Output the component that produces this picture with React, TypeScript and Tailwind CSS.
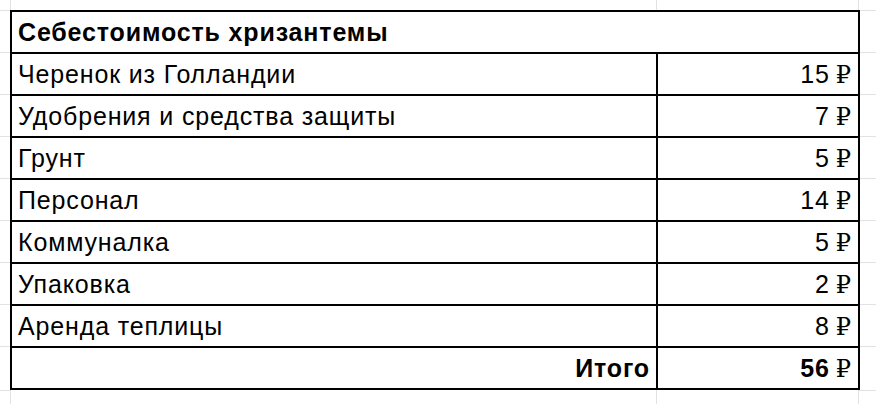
const items = [
  { name: 'Черенок из Голландии', cost: 15 },
  { name: 'Удобрения и средства защиты', cost: 7 },
  { name: 'Грунт', cost: 5 },
  { name: 'Персонал', cost: 14 },
  { name: 'Коммуналка', cost: 5 },
  { name: 'Упаковка', cost: 2 },
  { name: 'Аренда теплицы', cost: 8 },
]

function Rub() {
  return <span className="font-['DejaVu_Serif','Liberation_Serif',serif] text-[24px] font-normal tracking-normal">₽</span>
}

export default function App() {
  const total = items.reduce((s, i) => s + i.cost, 0)

  return (
    <div className="h-[404px] w-[876px] overflow-hidden bg-white font-['Liberation_Sans',Arial,sans-serif] text-[25px] tracking-[0.85px] text-black">
      {/* sheet gridlines above */}
      <div className="flex h-[10px]">
        <div className="w-[11px] border-r border-[#e2e2e2]" />
        <div className="w-[646px] border-r border-[#e2e2e2]" />
        <div className="w-[202px] border-r border-[#e2e2e2]" />
        <div className="flex-1" />
      </div>

      <div className="flex">
        <div className="flex w-[10px] flex-col">
          {Array.from({ length: 9 }).map((_, i) => (
            <div key={i} className="h-[42px] border-t border-[#e2e2e2]" />
          ))}
        </div>

        {/* the table */}
        <div className="w-[850px] border-2 border-black">
          <div className="flex h-[42px] items-center border-b-2 border-black pl-[6px] pt-[2px] font-bold">
            Себестоимость хризантемы
          </div>
          {items.map((it) => (
            <div key={it.name} className="flex h-[42px] border-b-2 border-black">
              <div className="flex w-[646px] items-center border-r-2 border-black pl-[6px] pt-[2px]">{it.name}</div>
              <div className="flex flex-1 items-center justify-end gap-[6px] pr-[7px] pt-[2px]">
                {it.cost} <Rub />
              </div>
            </div>
          ))}
          <div className="flex h-[40px] font-bold">
            <div className="flex w-[646px] items-center justify-end border-r-2 border-black pr-[6px] pt-[2px]">Итого</div>
            <div className="flex flex-1 items-center justify-end gap-[6px] pr-[7px] pt-[2px]">
              {total} <Rub />
            </div>
          </div>
        </div>

        <div className="flex flex-1 flex-col">
          {Array.from({ length: 9 }).map((_, i) => (
            <div key={i} className="h-[42px] border-t border-[#e2e2e2]" />
          ))}
        </div>
      </div>

      {/* sheet gridlines below */}
      <div className="flex h-[14px]">
        <div className="w-[11px] border-r border-t border-[#e2e2e2]" />
        <div className="w-[646px] border-r border-[#e2e2e2]" />
        <div className="w-[202px] border-r border-[#e2e2e2]" />
        <div className="flex-1 border-t border-[#e2e2e2]" />
      </div>
    </div>
  )
}
